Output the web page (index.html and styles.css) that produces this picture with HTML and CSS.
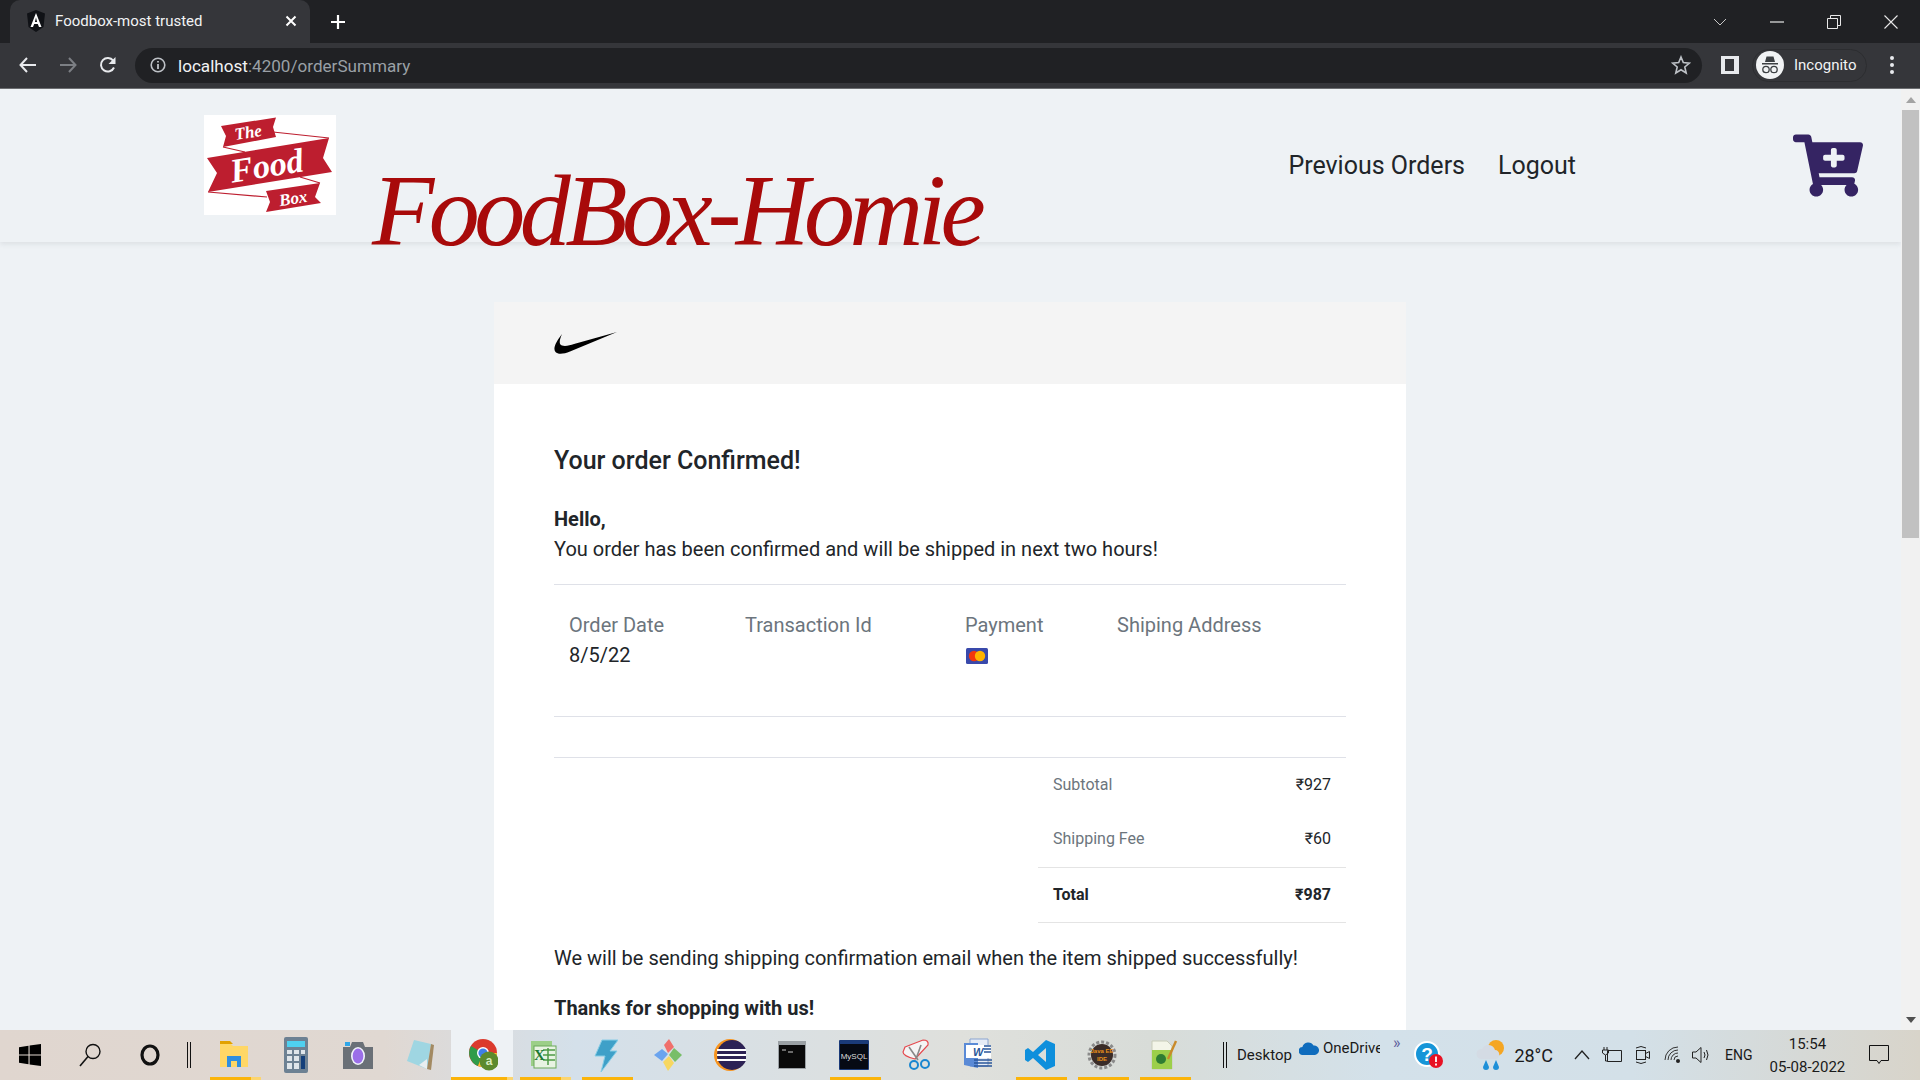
FILE: index.html
```html
<!DOCTYPE html>
<html lang="en">
<head>
    <meta charset="UTF-8">
    <title>Foodbox-most trusted</title>
    <link rel="stylesheet" href="styles.css">
</head>
<body>
    <!-- browser chrome -->
    <div class="tabstrip">
        <div class="tab">
            <svg class="tab-icon" width="20" height="22" viewBox="0 0 20 22"><path d="M10 0 L19 3.5 L17.5 17 L10 22 L2.5 17 L1 3.5 Z" fill="#101216"/><path d="M10 3 L15.5 17 H13 L11.8 14 H8.2 L7 17 H4.5 Z M10 7.5 L8.9 12 H11.1 Z" fill="#fff" fill-rule="evenodd"/></svg>
            <span class="tab-title">Foodbox-most trusted</span>
            <svg class="tab-close" width="12" height="12" viewBox="0 0 12 12"><path d="M1.5 1.5 L10.5 10.5 M10.5 1.5 L1.5 10.5" stroke="#fff" stroke-width="2"/></svg>
        </div>
        <svg class="tab-new" width="16" height="16" viewBox="0 0 16 16"><path d="M8 1 V15 M1 8 H15" stroke="#fff" stroke-width="2.2"/></svg>
        <div class="win-btns">
            <svg width="14" height="8" viewBox="0 0 14 8"><path d="M1 1 L7 7 L13 1" stroke="#c8c8c8" fill="none"/></svg>
            <svg class="win-min" width="14" height="2" viewBox="0 0 14 2"><path d="M0 1 H14" stroke="#e8e8e8" stroke-width="1.2"/></svg>
            <svg width="14" height="14" viewBox="0 0 14 14"><path d="M.5 3.5 H10.5 V13.5 H.5 Z M3.5 3.5 V.5 H13.5 V10.5 H10.5" stroke="#e8e8e8" fill="none"/></svg>
            <svg width="14" height="14" viewBox="0 0 14 14"><path d="M.5 .5 L13.5 13.5 M13.5 .5 L.5 13.5" stroke="#e8e8e8" stroke-width="1.1"/></svg>
        </div>
    </div>
    <div class="toolbar">
        <svg class="tool-btn" width="18" height="16" viewBox="0 0 18 16"><path d="M8 1 L1.5 8 L8 15 M2 8 H17" stroke="#e8eaed" stroke-width="2" fill="none"/></svg>
        <svg class="tool-btn" width="18" height="16" viewBox="0 0 18 16"><path d="M10 1 L16.5 8 L10 15 M16 8 H1" stroke="#7c7f84" stroke-width="2" fill="none"/></svg>
        <svg class="tool-btn" width="18" height="18" viewBox="0 0 18 18"><path d="M15 11.5 A6.8 6.8 0 1 1 14.2 4.6" stroke="#e8eaed" stroke-width="2" fill="none"/><path d="M16.5 1 V8 H9.5 Z" fill="#e8eaed"/></svg>
        <div class="omnibox">
            <svg width="16" height="16" viewBox="0 0 16 16"><circle cx="8" cy="8" r="6.8" stroke="#bdc1c6" stroke-width="1.6" fill="none"/><path d="M8 7 V12 M8 4 V5.6" stroke="#bdc1c6" stroke-width="1.8"/></svg>
            <span class="url"><span class="url-host">localhost</span>:4200/orderSummary</span>
            <svg class="star" width="20" height="20" viewBox="0 0 20 20"><path d="M10 2 L12.3 7.6 L18.4 8.1 L13.8 12 L15.2 18 L10 14.8 L4.8 18 L6.2 12 L1.6 8.1 L7.7 7.6 Z" stroke="#bdc1c6" stroke-width="1.6" fill="none"/></svg>
        </div>
        <svg class="side-btn" width="18" height="18" viewBox="0 0 18 18"><path d="M0 0 H18 V18 H0 Z M4 3 V15 H13 V3 Z" fill="#e8eaed" fill-rule="evenodd"/></svg>
        <div class="profile">
            <svg width="28" height="28" viewBox="0 0 28 28"><circle cx="14" cy="14" r="14" fill="#f1f3f4"/><path d="M9 11 L10.5 5.5 H17.5 L19 11 Z M6 12 H22 V13.4 H6 Z" fill="#3c4043"/><circle cx="10" cy="18.5" r="3.2" stroke="#3c4043" stroke-width="1.3" fill="none"/><circle cx="18" cy="18.5" r="3.2" stroke="#3c4043" stroke-width="1.3" fill="none"/></svg>
            <span>Incognito</span>
        </div>
        <svg class="menu-btn" width="4" height="18" viewBox="0 0 4 18"><circle cx="2" cy="2" r="2" fill="#e8eaed"/><circle cx="2" cy="9" r="2" fill="#e8eaed"/><circle cx="2" cy="16" r="2" fill="#e8eaed"/></svg>
    </div>

    <div class="viewport">
        <div class="page">
            <header class="navbar">
                <svg class="logo" width="132" height="100" viewBox="0 0 132 100">
                    <rect width="132" height="100" fill="#fff"/>
                    <path d="M69 17 L125 23 M19 32 L41 37 M96 62 L116 68 M4 77 L63 82" stroke="#bd1e2f" stroke-width="1.2"/>
                    <path d="M17 11 L72 2.5 L69 12 L72 22 L19 32 L22 21 Z M3 43 L125 23 L119 43 L128 57 L4 77 L13 58 Z M62 76 L116 68 L111 82 L117 88 L62 97 L66 87 Z" fill="#bd1e2f"/>
                    <text class="logo-small" x="44" y="23" transform="rotate(-9 44 17)">The</text>
                    <text class="logo-big" x="63" y="62" transform="rotate(-9 63 53)">Food</text>
                    <text class="logo-small" x="89" y="89" transform="rotate(-9 89 83)">Box</text>
                </svg>
                <div class="brand">FoodBox-Homie</div>
                <nav class="nav-links">
                    <a href="#">Previous Orders</a>
                    <a href="#">Logout</a>
                </nav>
                <svg class="cart" width="70" height="63" viewBox="0 0 576 512"><path fill-rule="evenodd" d="M528.12 301.319l47.273-208C578.806 78.301 567.391 64 551.99 64H159.208l-9.166-44.81C147.758 8.021 137.93 0 126.529 0H24C10.745 0 0 10.745 0 24v16c0 13.255 10.745 24 24 24h69.883l70.248 343.435C147.325 417.1 136 435.222 136 456c0 30.928 25.072 56 56 56s56-25.072 56-56c0-15.674-6.447-29.835-16.824-40h209.647C430.447 426.165 424 440.326 424 456c0 30.928 25.072 56 56 56s56-25.072 56-56c0-22.172-12.888-41.332-31.579-50.405l5.517-24.276c3.413-15.018-8.002-29.319-23.403-29.319H218.117l-6.545-32h293.145c11.206 0 20.92-7.754 23.403-18.681z M408 168h-48v-40c0-8.837-7.163-16-16-16h-16c-8.837 0-16 7.163-16 16v40h-48c-8.837 0-16 7.163-16 16v16c0 8.837 7.163 16 16 16h48v40c0 8.837 7.163 16 16 16h16c8.837 0 16-7.163 16-16v-40h48c8.837 0 16-7.163 16-16v-16c0-8.837-7.163-16-16-16z"/></svg>
            </header>

            <section class="card">
                <div class="card-head">
                    <svg width="63" height="23" viewBox="0 0 63 23"><path d="M63 0 L16 19.5 C10 22 4 22.8 1.5 20 C-1.5 16.5 2 10 8 2 C5.5 8 4.5 12 8 13.5 C11 14.5 16 13.5 20 12 Z"/></svg>
                </div>
                <div class="card-body">
                    <h2 class="order-title">Your order Confirmed!</h2>
                    <div class="hello">Hello,</div>
                    <div class="line">You order has been confirmed and will be shipped in next two hours!</div>

                    <div class="order-info">
                        <div class="muted">Order Date</div>
                        <div class="muted">Transaction Id</div>
                        <div class="muted">Payment</div>
                        <div class="muted">Shiping Address</div>
                        <div>8/5/22</div>
                        <div></div>
                        <div class="pay-cell">
                            <svg width="22" height="16" viewBox="0 0 22 16"><rect width="22" height="16" rx="1.5" fill="#3949ab"/><circle cx="8" cy="8" r="5.2" fill="#f4360c"/><circle cx="14" cy="8" r="5.2" fill="#ffb300"/></svg>
                        </div>
                        <div></div>
                    </div>

                    <div class="summary">
                        <div class="sum-row"><span class="muted">Subtotal</span><span>₹927</span></div>
                        <div class="sum-row"><span class="muted">Shipping Fee</span><span>₹60</span></div>
                        <div class="sum-row sum-total"><span>Total</span><span>₹987</span></div>
                    </div>

                    <div class="line note">We will be sending shipping confirmation email when the item shipped successfully!</div>
                    <div class="thanks">Thanks for shopping with us!</div>
                </div>
            </section>
        </div>
        <div class="scrollbar">
            <span class="arrow-up"></span>
            <div class="thumb"></div>
            <span class="arrow-down"></span>
        </div>
    </div>

    <!-- windows taskbar -->
    <footer class="taskbar">
        <div class="tb-start">
            <svg width="22" height="22" viewBox="0 0 22 22"><path d="M0 3.2 L9.5 1.8 V10.4 H0 Z M10.6 1.6 L22 0 V10.4 H10.6 Z M0 11.6 H9.5 V20.2 L0 18.8 Z M10.6 11.6 H22 V22 L10.6 20.4 Z"/></svg>
        </div>
        <div class="tb-start">
            <svg width="22" height="24" viewBox="0 0 22 24"><circle cx="14" cy="8.5" r="7" stroke="#111" stroke-width="1.4" fill="none"/><path d="M9 13.5 L1 23" stroke="#111" stroke-width="1.6"/></svg>
        </div>
        <div class="tb-start">
            <svg width="20" height="22" viewBox="0 0 20 22"><ellipse cx="10" cy="11" rx="8" ry="9" stroke="#111" stroke-width="3.2" fill="none"/></svg>
        </div>
        <div class="tb-sep"></div>

        <div class="tb-app on stack">
            <svg width="28" height="28" viewBox="0 0 28 28"><path d="M0 3 H11 L13 5 H28 V26 H0 Z" fill="#ffd766"/><path d="M0 0 H10 L13 3 H0 Z" fill="#e2a100"/><path d="M7 26 V15 H21 V26 H17 V20 H11 V26 Z" fill="#2f8fe0"/></svg>
        </div>
        <div class="tb-app">
            <svg width="24" height="36" viewBox="0 0 24 36"><rect width="24" height="36" rx="2" fill="#6d8193"/><rect x="3" y="4" width="18" height="6" fill="#4fd0f0"/><path d="M3 13 H8 V17 H3 Z M10 13 H15 V17 H10 Z M17 13 H21 V17 H17 Z M3 19 H8 V24 H3 Z M10 19 H15 V24 H10 Z M3 26 H8 V32 H3 Z M10 26 H15 V32 H10 Z" fill="#dfe5ea"/><rect x="17" y="19" width="4" height="13" fill="#143f7a"/></svg>
        </div>
        <div class="tb-app">
            <svg width="30" height="28" viewBox="0 0 30 28"><path d="M0 6 H7 L9 1 H20 L22 6 H30 V28 H0 Z" fill="#6a7077"/><rect x="2" y="1" width="5" height="4" fill="#2fa6e8"/><ellipse cx="15" cy="15" rx="7" ry="9" fill="#f0f4fa"/><ellipse cx="15" cy="15" rx="5.4" ry="7.4" fill="#9b6fe8"/></svg>
        </div>
        <div class="tb-app">
            <svg width="28" height="32" viewBox="0 0 28 32"><path d="M8 1 L25 5 L21 30 L1 22 Z" fill="#9fd6e2"/><path d="M25 5 L28 6 L25 31 L21 30 Z" fill="#a38a62"/><path d="M13 26 L21 20 L21 30 Z" fill="#e8eef0"/></svg>
        </div>
        <div class="tb-app active on stack">
            <svg width="32" height="32" viewBox="-3 0 32 32"><circle cx="14" cy="14" r="14" fill="#db3a2d"/><path d="M14 14 L2 7 A14 14 0 0 0 9 27 Z" fill="#2f9c4a"/><path d="M14 14 L9 27 A14 14 0 0 0 28 14 Z" fill="#f7c72f"/><circle cx="14" cy="14" r="6" fill="#fff"/><circle cx="14" cy="14" r="4.6" fill="#3f7fe8"/><circle cx="20" cy="22" r="9.5" fill="#5c8a2e"/><text class="chrome-badge" x="20" y="26">a</text></svg>
        </div>
        <div class="tb-app on stack">
            <svg width="28" height="30" viewBox="2 0 28 30"><path d="M3 1 H24 V8 H6 V26 H3 Z" fill="#9ccf88"/><rect x="6" y="6" width="22" height="22" fill="#e8f3e2" stroke="#6aa85a"/><path d="M15 10 H27 M15 15 H27 M15 20 H27 M20 8 V25" stroke="#4e9a45" stroke-width="1.5"/><text class="excel-x" x="6" y="20">X</text></svg>
        </div>
        <div class="tb-app on">
            <svg width="24" height="34" viewBox="0 0 24 34"><path d="M8 2 H24 L16 13 H23 L7 34 L11 18 H1 Z" fill="#3fa0c8" stroke="#86cde6"/></svg>
        </div>
        <div class="tb-app">
            <svg width="32" height="32" viewBox="0 0 32 32"><path d="M10 10 L16 15 L10 22 L2 16 Z" fill="#6ba4ee"/><path d="M17 0 L22 8 L16 14 L12 6 Z" fill="#f0706c"/><path d="M22 9 L30 16 L23 23 L17 16 Z" fill="#78be68"/><path d="M11 23 L17 17 L22 24 L16 32 Z" fill="#f7d760"/></svg>
        </div>
        <div class="tb-app">
            <svg width="32" height="32" viewBox="0 0 32 32"><circle cx="16" cy="16" r="16" fill="#f7941e"/><circle cx="18" cy="16" r="15" fill="#2c2255"/><path d="M3 11 H32 M3 16 H32 M3 21 H32" stroke="#fff" stroke-width="2"/></svg>
        </div>
        <div class="tb-app">
            <svg width="28" height="28" viewBox="0 0 28 28"><rect width="28" height="28" fill="#9aa0a4"/><rect x="1" y="4" width="26" height="23" fill="#0a0a0a"/><path d="M4 9 H8 M10 11 H15" stroke="#ccc"/></svg>
        </div>
        <div class="tb-app on">
            <svg width="30" height="30" viewBox="0 0 30 30"><rect width="30" height="30" rx="1" fill="#1a3a78"/><rect x="1" y="4" width="28" height="25" fill="#060a14"/><text class="mysql-txt" x="15" y="19">MySQL</text></svg>
        </div>
        <div class="tb-app">
            <svg width="30" height="32" viewBox="0 0 30 32"><path d="M4 8 L22 1 Q28 1 27 6 L14 20 Q2 17 2 13 Z" stroke="#e5484d" stroke-width="1.2" fill="#f4f4f4"/><path d="M20 6 L15 20 M8 8 L17 21" stroke="#888" stroke-width="1.6"/><circle cx="13" cy="26" r="4" stroke="#1a86d0" stroke-width="2" fill="none"/><circle cx="24" cy="25" r="4" stroke="#1a86d0" stroke-width="2" fill="none"/></svg>
        </div>
        <div class="tb-app">
            <svg width="28" height="34" viewBox="0 0 28 34"><path d="M6 1 H24 V28 H6 Z" fill="#e6ecf6" stroke="#8aa4d0"/><path d="M0 5 H14 V30 L0 27 Z" fill="#5a8ad6"/><path d="M2 7 H27 V20 H2 Z" fill="#fff"/><text class="word-w" x="9" y="18">W</text><path d="M10 22 H28 M10 25 H28 M10 28 H28 M20 8 H27 M20 11 H27 M20 14 H27" stroke="#2b579a" stroke-width="1.3"/></svg>
        </div>
        <div class="tb-app on">
            <svg width="30" height="30" viewBox="0 0 30 30"><path d="M21 0 L30 4 V26 L21 30 L8 18 L3 22 L0 20 V10 L3 8 L8 12 Z M21 8 L13 15 L21 22 Z" fill="#0e8fdc" fill-rule="evenodd"/></svg>
        </div>
        <div class="tb-app on">
            <svg width="30" height="30" viewBox="0 0 30 30"><circle cx="15" cy="15" r="13" stroke="#8a8a8a" stroke-width="3" stroke-dasharray="3 2" fill="none"/><circle cx="15" cy="15" r="11" fill="#3a2c28"/><text class="java-txt" x="15" y="13">Java EE</text><text class="java-txt" x="15" y="21">IDE</text></svg>
        </div>
        <div class="tb-app on">
            <svg width="28" height="32" viewBox="0 0 28 32"><path d="M2 2 H17 L22 7 V30 H2 Z" fill="#f3f5e8" stroke="#c8ccb8"/><path d="M2 11 H22 V30 H2 Z" fill="#9ccf4a"/><circle cx="11" cy="20" r="5" fill="#2e7d32"/><path d="M18 20 L26 2" stroke="#c98a2a" stroke-width="2.4"/></svg>
        </div>

        <div class="tb-sep tb-sep-right"></div>
        <span class="tb-desktop">Desktop</span>
        <svg class="od-icon" width="20" height="14" viewBox="0 0 20 14"><path d="M4 14 A4 4 0 0 1 3.4 6 A6 6 0 0 1 14.5 4.6 A4.6 4.6 0 0 1 16 14 Z" fill="#0f6cbd"/></svg>
        <span class="tb-onedrive">OneDrive</span>
        <span class="tb-more">»</span>
        <svg class="tray-help" width="30" height="28" viewBox="0 0 30 28"><circle cx="13" cy="13" r="12" fill="#1695d8" stroke="#fff" stroke-width="2"/><text class="help-q" x="13" y="20">?</text><circle cx="22" cy="20" r="7" fill="#e81123"/><path d="M22 15.5 V21 M22 22.5 V24.5" stroke="#fff" stroke-width="1.8"/></svg>
        <svg class="tray-weather" width="30" height="32" viewBox="0 0 30 32"><circle cx="20" cy="9" r="8" fill="#f5a623"/><path d="M5 20 A5 5 0 0 1 6 10 A7 7 0 0 1 19 11 A4.6 4.6 0 0 1 20 20 Z" fill="#d4dbe4"/><path d="M10 21 L7 28 A3 3 0 0 0 13 28 Z M20 21 L17 28 A3 3 0 0 0 23 28 Z" fill="#1e90d8"/></svg>
        <span class="tray-temp">28°C</span>
        <svg class="tray-caret" width="16" height="10" viewBox="0 0 16 10"><path d="M1 9 L8 1 L15 9" stroke="#222" stroke-width="1.3" fill="none"/></svg>
        <svg class="tray-ico" width="20" height="16" viewBox="0 0 20 16"><path d="M5.5 3.5 H19.5 V14.5 H5.5 Z" stroke="#222" fill="none"/><path d="M2 0 V3 M5 0 V3 M0.5 3 H6.5 V6 L3.5 8 L0.5 6 Z M3.5 8 V14 H6" stroke="#222" fill="none"/></svg>
        <svg class="tray-ico" width="16" height="20" viewBox="0 0 16 20"><rect x="2.5" y="5.5" width="9" height="9" stroke="#222" fill="none"/><path d="M11.5 8.5 L15.5 6.5 V13.5 L11.5 11.5 M2 3 Q7 0 12 3 M2 17 Q7 20 12 17" stroke="#222" fill="none"/></svg>
        <svg class="tray-ico tray-wifi" width="18" height="18" viewBox="0 0 18 18"><path d="M1 14 A13 13 0 0 1 14 1 M4 14 A10 10 0 0 1 14 4 M7 14 A7 7 0 0 1 14 7 M10 14 A4 4 0 0 1 14 10" stroke="#333" fill="none"/><circle cx="14" cy="15" r="2" fill="#222"/></svg>
        <svg class="tray-ico tray-vol" width="20" height="18" viewBox="0 0 20 18"><path d="M.5 6 H4 L9 1.5 V16.5 L4 12 H.5 Z M12 6 Q14 9 12 12 M14.5 4 Q17.5 9 14.5 14" stroke="#222" fill="none"/></svg>
        <span class="tray-lang">ENG</span>
        <div class="tray-clock"><span>15:54</span><span>05-08-2022</span></div>
        <svg class="tray-note" width="20" height="20" viewBox="0 0 20 20"><path d="M.5 .5 H19.5 V15.5 H12 L10 18.5 L8 15.5 H.5 Z" stroke="#111" fill="none"/></svg>
    </footer>
</body>
</html>
```

FILE: styles.css
```css
* {
    margin: 0;
    padding: 0;
    box-sizing: border-box;
}

body {
    display: flex;
    flex-direction: column;
    height: 100vh;
    overflow: hidden;
    font-family: Roboto, "Liberation Sans", sans-serif;
    color: #212529;
    background: #eef2f5;
}

/* browser chrome */
.tabstrip {
    display: flex;
    align-items: center;
    height: 43px;
    background: #202124;
    flex-shrink: 0;
}

.tab {
    display: flex;
    align-items: center;
    width: 300px;
    height: 43px;
    margin-left: 10px;
    padding: 0 13px 2px 16px;
    background: #35363a;
    border-radius: 10px 10px 0 0;
}

.tab-title {
    margin-left: 9px;
    font-size: 15px;
    color: #f1f3f4;
}

.tab-close {
    margin-left: auto;
}

.tab-new {
    margin-left: 20px;
}

.win-btns {
    display: flex;
    align-items: center;
    gap: 43px;
    margin-left: auto;
    margin-right: 22px;
}

.toolbar {
    display: flex;
    align-items: center;
    height: 46px;
    padding-bottom: 1px;
    background: #35363a;
    border-bottom: 1px solid #6b6d70;
    flex-shrink: 0;
}

.tool-btn {
    margin-left: 18px;
    margin-right: 4px;
}

.tool-btn:first-child {
    margin-left: 19px;
}

.omnibox {
    display: flex;
    align-items: center;
    width: 1567px;
    height: 35px;
    margin-left: 14px;
    padding: 0 11px 0 15px;
    background: #202124;
    border-radius: 18px;
}

.url {
    margin-left: 12px;
    padding-top: 2px;
    font-size: 17.1px;
    color: #9aa0a6;
}

.url-host {
    color: #f1f3f4;
}

.star {
    margin-left: auto;
}

.side-btn {
    margin-left: 19px;
}

.profile {
    display: flex;
    align-items: center;
    gap: 10px;
    width: 115px;
    height: 33px;
    margin-left: 13px;
    padding-left: 3px;
    border: 1px solid #2c2d30;
    border-radius: 17px;
    font-size: 15px;
    color: #f1f3f4;
}

.menu-btn {
    margin-left: 23px;
}

/* page */
.viewport {
    display: flex;
    flex: 1;
    min-height: 0;
    overflow: hidden;
}

.page {
    flex: 1;
    min-width: 0;
}

.navbar {
    display: flex;
    align-items: center;
    height: 153px;
    padding-left: 204px;
    padding-right: 38px;
    box-shadow: 0 2px 5px rgba(60, 70, 80, 0.1);
}

.logo {
    margin-top: -1px;
    flex-shrink: 0;
}

.logo-small,
.logo-big {
    font-family: "Liberation Serif", serif;
    font-weight: 700;
    font-style: italic;
    fill: #fff;
    text-anchor: middle;
}

.logo-small {
    font-size: 17px;
}

.logo-big {
    font-size: 34px;
}

.brand {
    align-self: flex-end;
    margin-left: 36px;
    margin-bottom: -26px;
    font-family: "Liberation Serif", serif;
    font-style: italic;
    font-size: 102px;
    line-height: 115px;
    letter-spacing: -5.5px;
    color: #a80a0a;
    white-space: nowrap;
}

.nav-links {
    display: flex;
    gap: 33px;
    margin-left: auto;
    margin-right: 217px;
}

.nav-links a {
    font-size: 25px;
    color: #212529;
    text-decoration: none;
}

.cart {
    fill: #352463;
}

.card {
    width: 912px;
    margin: 60px 0 0 494px;
    background: #fff;
}

.card-head {
    display: flex;
    align-items: center;
    height: 82px;
    padding-left: 60px;
    background: #f4f4f4;
}

.card-body {
    padding: 62px 60px 60px;
    font-size: 20px;
    line-height: 30px;
}

.order-title {
    font-size: 25px;
    font-weight: 500;
    line-height: 29px;
    margin-bottom: 29px;
}

.hello,
.thanks {
    font-weight: 700;
}

.line {
    padding-bottom: 20px;
}

.muted {
    color: #6c757d;
}

.order-info {
    display: grid;
    grid-template-columns: 176px 220px 152px 1fr;
    padding: 25px 15px 46px;
    border-top: 1px solid #dfe1e8;
    border-bottom: 1px solid #dfe1e8;
}

.pay-cell {
    display: flex;
    align-items: center;
    padding: 2px 0 0 1px;
}

.summary {
    margin-top: 40px;
    border-top: 1px solid #dfe1e8;
    display: flex;
    flex-direction: column;
    align-items: flex-end;
    font-size: 16px;
    line-height: 24px;
}

.sum-row {
    display: flex;
    justify-content: space-between;
    width: 308px;
    padding: 15px 15px 15px;
}

.sum-row:nth-child(2) {
    padding-bottom: 16px;
}

.sum-total {
    font-weight: 700;
    border-top: 1px solid #e4e4e4;
    border-bottom: 1px solid #e4e4e4;
}

.note {
    margin-top: 20px;
}

.scrollbar {
    position: relative;
    width: 19px;
    background: #f1f1f1;
    flex-shrink: 0;
}

.thumb {
    width: 17px;
    height: 428px;
    margin: 21px 0 0 1px;
    background: #c1c1c1;
}

.arrow-up,
.arrow-down {
    position: absolute;
    left: 5px;
    border-left: 5px solid transparent;
    border-right: 5px solid transparent;
}

.arrow-up {
    top: 8px;
    border-bottom: 6px solid #a3a3a3;
}

.arrow-down {
    bottom: 7px;
    border-top: 6px solid #505050;
}

/* taskbar */
.taskbar {
    display: flex;
    align-items: center;
    height: 50px;
    flex-shrink: 0;
    color: #1a1a1a;
    background: linear-gradient(90deg, #e0d6cf 0%, #e0d8d2 20%, #d4e0ea 30%, #dfe0dc 50%, #d8dcd8 60%, #d3e1ea 72%, #d3e0e8 85%, #d8d4ca 100%);
}

.tb-start {
    display: flex;
    justify-content: center;
    align-items: center;
    width: 60px;
}

.tb-sep {
    width: 4px;
    height: 26px;
    margin: 0 12px 0 7px;
    border-left: 1px solid #111;
    border-right: 1px solid #111;
}

.tb-sep-right {
    margin: 0 0 0 28px;
}

.tb-app {
    position: relative;
    display: flex;
    justify-content: center;
    align-items: center;
    width: 62px;
    height: 50px;
}

.tb-app.on::after {
    content: "";
    position: absolute;
    left: 7px;
    right: 4px;
    bottom: 0;
    height: 3px;
    background: #fbb40a;
}

.tb-app.stack::after {
    background: linear-gradient(90deg, #fbb40a 80%, #fcd56f 80%);
}

.tb-app.active {
    background: #eef2f5;
}

.tb-app.active::after {
    left: 0;
    right: 0;
    background: linear-gradient(90deg, #fbb40a 90%, #fcd56f 90%);
}

.chrome-badge {
    font: 700 12px "Liberation Sans", sans-serif;
    fill: #d7ecc0;
    text-anchor: middle;
}

.excel-x {
    font: 700 15px "Liberation Serif", serif;
    fill: #1e7a34;
}

.mysql-txt {
    font: 8px "Liberation Sans", sans-serif;
    fill: #ddd;
    text-anchor: middle;
}

.word-w {
    font: italic 700 11px "Liberation Sans", sans-serif;
    fill: #2b579a;
}

.java-txt {
    font: 700 6px "Liberation Sans", sans-serif;
    fill: #e8901a;
    text-anchor: middle;
}

.help-q {
    font: 700 19px "Liberation Sans", sans-serif;
    fill: #fff;
    text-anchor: middle;
}

.tb-desktop {
    margin-left: 10px;
    font-size: 15px;
}

.od-icon {
    margin: -14px 0 0 7px;
}

.tb-onedrive {
    width: 57px;
    margin: -14px 0 0 4px;
    overflow: hidden;
    font-size: 15px;
    white-space: nowrap;
}

.tb-more {
    margin: -26px 0 0 13px;
    font-size: 16px;
    color: #5c5c9c;
}

.tray-help {
    margin-left: 14px;
}

.tray-weather {
    margin-left: 32px;
}

.tray-temp {
    margin-left: 8px;
    font-size: 18px;
}

.tray-caret {
    margin-left: 21px;
}

.tray-ico {
    margin-left: 12px;
}

.tray-wifi {
    margin-left: 14px;
}

.tray-vol {
    margin-left: 10px;
}

.tray-lang {
    margin-left: 13px;
    font-size: 14px;
}

.tray-clock {
    display: flex;
    flex-direction: column;
    align-items: center;
    gap: 5px;
    margin-left: 17px;
    font-size: 15px;
}

.tray-note {
    margin-left: 24px;
}
```
